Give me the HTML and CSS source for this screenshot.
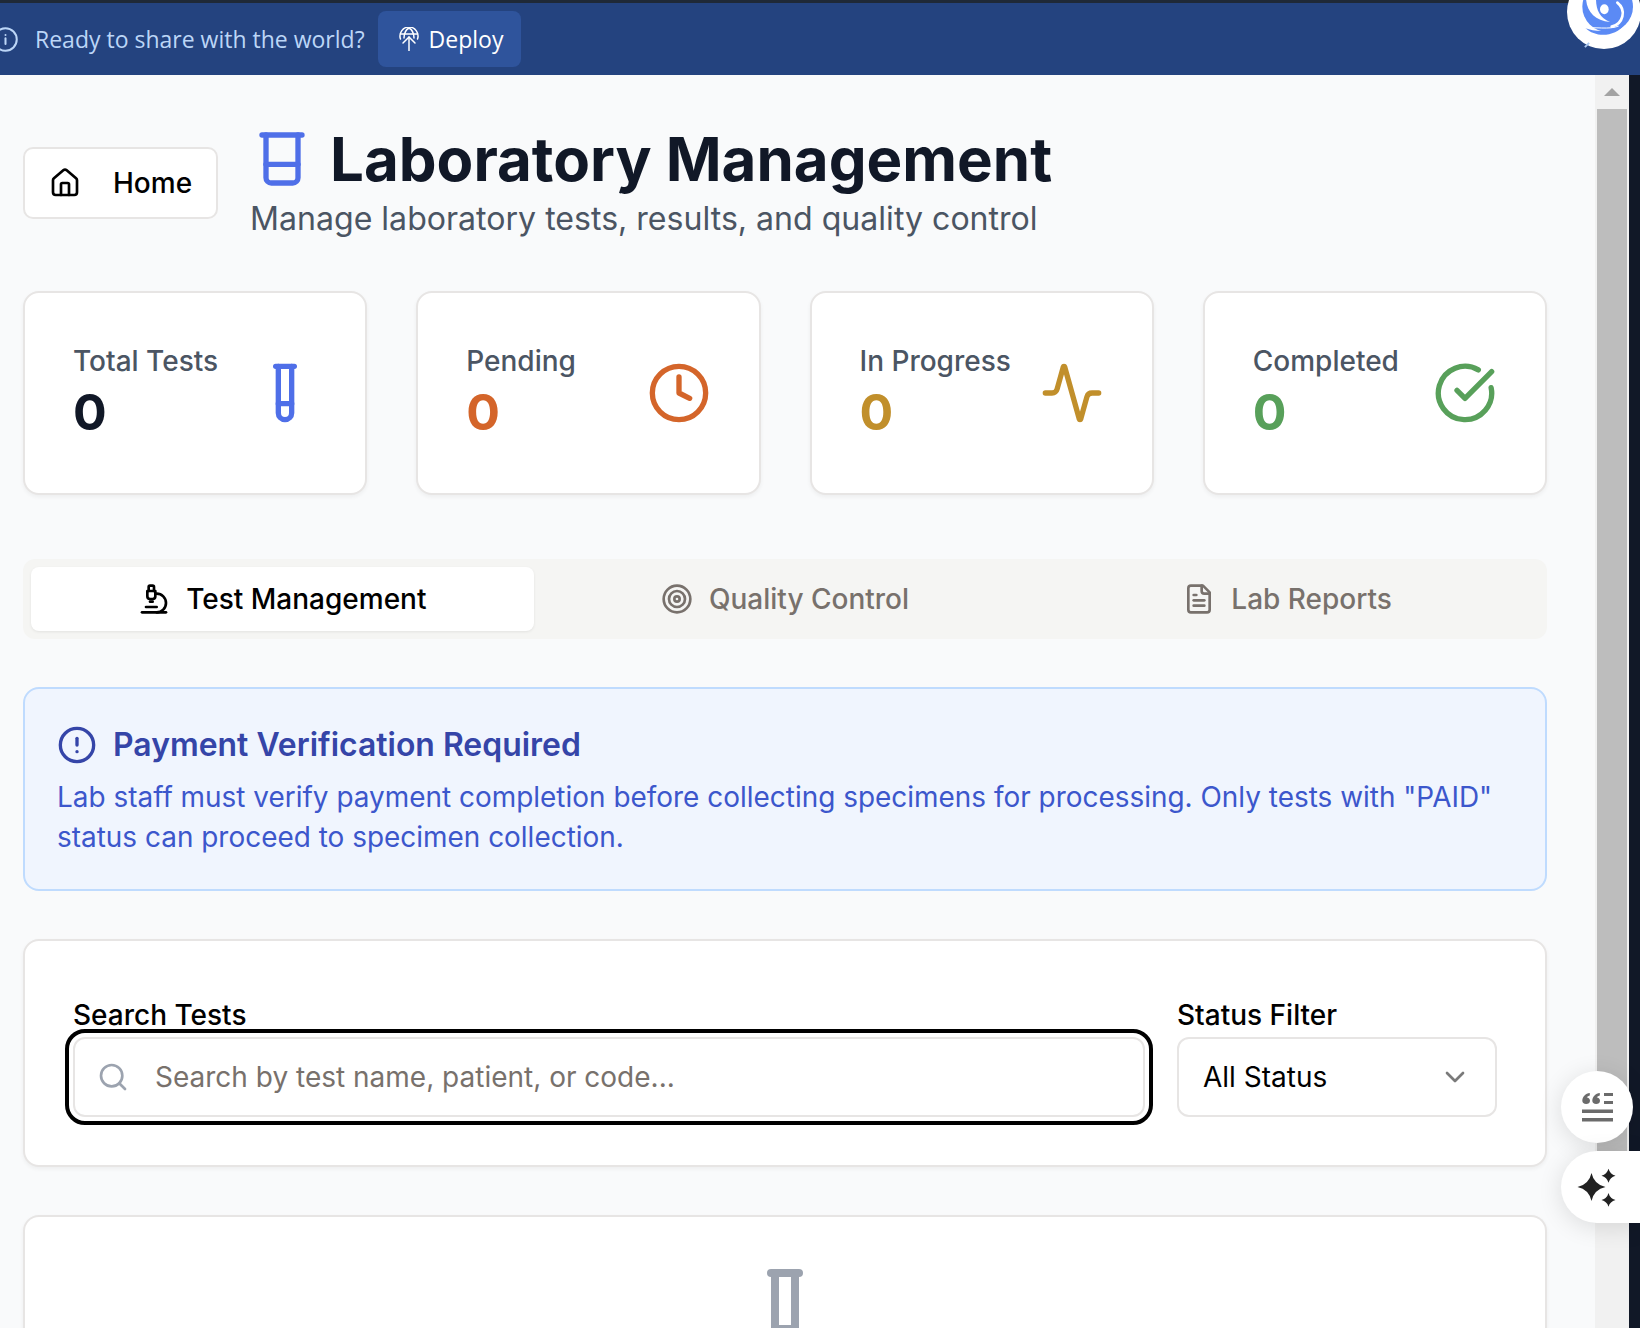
FILE: index.html
```html
<!DOCTYPE html>
<html lang="en">
<head>
    <meta charset="UTF-8" />
    <meta name="viewport" content="width=device-width, initial-scale=1.0" />
    <title>Laboratory Management</title>
    <link rel="stylesheet" href="styles.css">
</head>
<body>
    <header class="deploy-bar">
        <svg class="bar-info" viewBox="0 0 24 24"><circle cx="12" cy="12" r="10"/><path d="M12 16v-5"/><path d="M12 8h.01"/></svg>
        <span class="bar-text">Ready to share with the world?</span>
        <button class="deploy-btn">
            <svg viewBox="0 0 20 24"><path d="M1.500 12A9 9 0 1 1 18.500 12"/><path d="M10 1C6.500 3 5 7 5 11"/><path d="M10 1c3.500 2 5 6 5 10"/><path d="M1.500 7h17"/><path d="M10 24V10"/><path d="m4 16 6-6 6 6"/></svg>
            Deploy
        </button>
    </header>

    <div class="viewport">
        <main class="page">
            <section class="page-head">
                <a class="home-btn" href="#">
                    <svg class="icon" viewBox="0 0 24 24"><path d="M15 21v-8a1 1 0 0 0-1-1h-4a1 1 0 0 0-1 1v8"/><path d="M3 10a2 2 0 0 1 .709-1.528l7-5.999a2 2 0 0 1 2.582 0l7 5.999A2 2 0 0 1 21 10v9a2 2 0 0 1-2 2H5a2 2 0 0 1-2-2z"/></svg>
                    Home
                </a>
                <div>
                    <h1>
                        <svg class="icon title-icon" viewBox="0 0 24 24"><path d="M4.500 3h15"/><path d="M6 3v16a2 2 0 0 0 2 2h8a2 2 0 0 0 2-2V3"/><path d="M6 14h12"/></svg>
                        Laboratory Management
                    </h1>
                    <p class="subtitle">Manage laboratory tests, results, and quality control</p>
                </div>
            </section>

            <section class="stats">
                <div class="stat-card">
                    <div class="stat-text">
                        <p class="stat-label">Total Tests</p>
                        <p class="stat-value">0</p>
                    </div>
                    <svg class="icon stat-icon blue" viewBox="0 0 24 24"><path d="M14.500 2v17.500c0 1.400-1.100 2.500-2.500 2.500s-2.500-1.100-2.500-2.500V2"/><path d="M8.500 2h7"/><path d="M14.500 16h-5"/></svg>
                </div>
                <div class="stat-card">
                    <div class="stat-text">
                        <p class="stat-label">Pending</p>
                        <p class="stat-value orange">0</p>
                    </div>
                    <svg class="icon stat-icon orange" viewBox="0 0 24 24"><circle cx="12" cy="12" r="10"/><path d="M12 6v6l4 2"/></svg>
                </div>
                <div class="stat-card">
                    <div class="stat-text">
                        <p class="stat-label">In Progress</p>
                        <p class="stat-value amber">0</p>
                    </div>
                    <svg class="icon stat-icon amber" viewBox="0 0 24 24"><path d="M22 12h-2.480a2 2 0 0 0-1.930 1.460l-2.350 8.360a.25.25 0 0 1-.48 0L9.240 2.180a.25.25 0 0 0-.48 0l-2.350 8.360A2 2 0 0 1 4.490 12H2"/></svg>
                </div>
                <div class="stat-card">
                    <div class="stat-text">
                        <p class="stat-label">Completed</p>
                        <p class="stat-value green">0</p>
                    </div>
                    <svg class="icon stat-icon green" viewBox="0 0 24 24"><path d="M21.801 10A10 10 0 1 1 17 3.335"/><path d="m9 11 3 3L22 4"/></svg>
                </div>
            </section>

            <nav class="tabs">
                <button class="tab active">
                    <svg class="icon" viewBox="0 0 24 24"><path d="M6 18h8"/><path d="M3 22h18"/><path d="M14 22a7 7 0 1 0 0-14h-1"/><path d="M9 14h2"/><path d="M9 12a2 2 0 0 1-2-2V6h6v4a2 2 0 0 1-2 2Z"/><path d="M12 6V3a1 1 0 0 0-1-1H9a1 1 0 0 0-1 1v3"/></svg>
                    Test Management
                </button>
                <button class="tab">
                    <svg class="icon" viewBox="0 0 24 24"><circle cx="12" cy="12" r="10"/><circle cx="12" cy="12" r="6"/><circle cx="12" cy="12" r="2"/></svg>
                    Quality Control
                </button>
                <button class="tab">
                    <svg class="icon" viewBox="0 0 24 24"><path d="M15 2H6a2 2 0 0 0-2 2v16a2 2 0 0 0 2 2h12a2 2 0 0 0 2-2V7Z"/><path d="M14 2v4a2 2 0 0 0 2 2h4"/><path d="M10 9H8"/><path d="M16 13H8"/><path d="M16 17H8"/></svg>
                    Lab Reports
                </button>
            </nav>

            <section class="notice">
                <h3>
                    <svg class="icon" viewBox="0 0 24 24"><circle cx="12" cy="12" r="10"/><path d="M12 8v4"/><path d="M12 16h.01"/></svg>
                    Payment Verification Required
                </h3>
                <p>Lab staff must verify payment completion before collecting specimens for processing. Only tests with "PAID" status can proceed to specimen collection.</p>
            </section>

            <section class="card filters">
                <div class="field grow">
                    <label for="search">Search Tests</label>
                    <div class="search-box">
                        <svg class="icon" viewBox="0 0 24 24"><path d="m21 21-4.340-4.340"/><circle cx="11" cy="11" r="8"/></svg>
                        <input id="search" type="text" placeholder="Search by test name, patient, or code..." />
                    </div>
                </div>
                <div class="field status">
                    <label>Status Filter</label>
                    <div class="select-box">
                        All Status
                        <svg class="icon" viewBox="0 0 24 24"><path d="m6 9 6 6 6-6"/></svg>
                    </div>
                </div>
            </section>

            <section class="card empty">
                <svg class="icon" viewBox="0 0 24 24"><path d="M14.500 2v17.500c0 1.400-1.100 2.500-2.500 2.500s-2.500-1.100-2.500-2.500V2"/><path d="M8.500 2h7"/><path d="M14.500 16h-5"/></svg>
            </section>
        </main>

        <div class="scrollbar">
            <div class="scroll-arrow"></div>
            <div class="scroll-thumb"></div>
        </div>
        <div class="edge"></div>
    </div>

    <svg class="logo-bubble" viewBox="0 0 240 180">
        <circle cx="132" cy="36" r="111" fill="#fff"/>
        <circle cx="143" cy="20" r="76" fill="#5b8af5"/>
        <path d="M78-5C80 35 105 62 150 66 118 52 108 30 108-5Z" fill="#fff"/>
        <path class="swirl" d="M172 8C200 30 190 72 155 80"/>
        <ellipse cx="133" cy="28" rx="13" ry="15" fill="#fff"/>
        <path d="M76 84C104 96 156 100 196 72 164 112 108 114 76 84Z" fill="#5b8af5"/>
        <path d="M74 84C100 80 150 90 176 78" fill="none" stroke="#fff" stroke-width="3"/>
    </svg>
    <button class="float-btn quote-btn">
        <svg viewBox="0 0 31 29"><path d="M.3 7.500C.6 3.500 3.500.6 7.800 0v2.600C6 3 5 4.200 4.700 4.200 6.600 4.600 8 6 8 7.700 8 9.800 6.300 11 4.200 11 1.800 11 .2 9.600.3 7.500Z"/><path d="M10.300 7.500C10.600 3.500 13.500.6 17.800 0v2.600C16 3 15 4.200 14.700 4.200 16.600 4.600 18 6 18 7.700 18 9.800 16.300 11 14.200 11 11.800 11 10.200 9.600 10.300 7.500Z"/><path d="M22 0h9v3h-9zM22 8h9v3h-9zM0 16.500h31V20H0zM0 25h31v3.500H0z"/></svg>
    </button>
    <button class="float-btn spark-btn">
        <svg viewBox="0 0 39 39"><path d="M14.500 5Q17 16.500 28.500 19 17 21.500 14.500 33 12 21.500.5 19 12 16.500 14.500 5Z"/><path d="M31.500.7Q33 6 38.500 7.700 33 9.200 31.500 14.700 30 9.200 24.500 7.700 30 6 31.500.7Z"/><path d="M31.500 25Q33 30.500 38.500 32 33 33.500 31.500 38.700 30 33.500 24.500 32 30 30.500 31.500 25Z"/></svg>
    </button>
    <div class="bar-chevron"></div>
</body>
</html>
```

FILE: styles.css
```css
* {
    box-sizing: border-box;
}
html, body {
    height: 100%;
}
body {
    margin: 0;
    font-family: Inter, "Liberation Sans", sans-serif;
    background-color: #f9fafb;
    color: #000;
    overflow: hidden;
    display: flex;
    flex-direction: column;
}
p, h1, h3 {
    margin: 0;
}
.icon {
    fill: none;
    stroke: currentColor;
    stroke-width: 2;
    stroke-linecap: round;
    stroke-linejoin: round;
    flex-shrink: 0;
}

/* deploy banner */
.deploy-bar {
    height: 75px;
    flex-shrink: 0;
    background-color: #24437f;
    border-top: 3px solid #1f2937;
    display: flex;
    align-items: center;
    padding-left: 35px;
    gap: 13px;
    position: relative;
    color: #bcd6f7;
    font-family: "Open Sans", sans-serif;
    font-size: 23px;
}
.bar-info {
    position: absolute;
    left: -8px;
    top: 23px;
    width: 27px;
    height: 27px;
    fill: none;
    stroke: currentColor;
    stroke-width: 1.8;
    stroke-linecap: round;
}
.deploy-btn {
    width: 143px;
    height: 56px;
    border: none;
    border-radius: 8px;
    background-color: #2f549c;
    color: #fff;
    font-family: inherit;
    font-size: 23px;
    display: flex;
    align-items: center;
    gap: 10px;
    padding: 0 0 0 21px;
}
.deploy-btn svg {
    width: 20px;
    height: 24px;
    fill: none;
    stroke: currentColor;
    stroke-width: 1.5;
    stroke-linecap: round;
    stroke-linejoin: round;
}

.viewport {
    flex: 1;
    display: flex;
    min-height: 0;
}
.page {
    flex: 1;
    min-width: 0;
    padding: 52px 48px 0 23px;
    overflow: hidden;
}

/* header */
.page-head {
    display: flex;
    align-items: center;
    gap: 32px;
    margin-bottom: 52px;
}
.home-btn {
    width: 195px;
    height: 72px;
    background-color: #fff;
    border: 2px solid #e7e5e4;
    border-radius: 10px;
    color: #000;
    text-decoration: none;
    font-size: 28px;
    font-weight: 500;
    display: flex;
    align-items: center;
    gap: 32px;
    padding-left: 24px;
}
.home-btn .icon {
    width: 32px;
    height: 32px;
}
h1 {
    font-size: 60px;
    font-weight: 700;
    line-height: 60px;
    color: #111827;
    display: flex;
    align-items: center;
    gap: 16px;
}
.title-icon {
    width: 64px;
    height: 64px;
    color: #4f6fe8;
}
.subtitle {
    font-size: 32.1px;
    line-height: 40px;
    color: #4b5563;
    margin-top: 8px;
}

/* stat cards */
.stats {
    display: grid;
    grid-template-columns: repeat(4, 1fr);
    gap: 49px;
    margin-bottom: 64px;
}
.stat-card {
    height: 204px;
    background-color: #fff;
    border: 2px solid #e7e5e4;
    border-radius: 16px;
    box-shadow: 0 2px 4px rgba(0, 0, 0, 0.05);
    padding: 0 48px;
    display: flex;
    align-items: center;
    justify-content: space-between;
}
.stat-text {
    padding-bottom: 4px;
}
.stat-label {
    font-size: 28px;
    line-height: 40px;
    font-weight: 500;
    color: #4b5563;
}
.stat-value {
    font-size: 50px;
    line-height: 60px;
    font-weight: 700;
    color: #111827;
    margin-top: 1px;
}
.stat-icon {
    width: 64px;
    height: 64px;
}
.blue { color: #4f6fe8; }
.orange { color: #d4652a; }
.amber { color: #c18f2b; }
.green { color: #58a05a; }
.stat-value.orange { color: #d4652a; }
.stat-value.amber { color: #c18f2b; }
.stat-value.green { color: #58a05a; }

/* tabs */
.tabs {
    display: grid;
    grid-template-columns: repeat(3, 1fr);
    height: 80px;
    padding: 8px;
    background-color: #f5f5f3;
    border-radius: 12px;
    margin-bottom: 48px;
}
.tab {
    border: none;
    background: none;
    border-radius: 8px;
    font-family: inherit;
    font-size: 28px;
    font-weight: 500;
    color: #78716c;
    display: flex;
    align-items: center;
    justify-content: center;
    gap: 16px;
}
.tab .icon {
    width: 32px;
    height: 32px;
}
.tab.active {
    background-color: #fff;
    color: #000;
    box-shadow: 0 1px 3px rgba(0, 0, 0, 0.08);
}

/* payment notice */
.notice {
    height: 204px;
    padding: 34px 32px 0;
    background-color: #f0f5fe;
    border: 2px solid #bfdbfe;
    border-radius: 16px;
    margin-bottom: 48px;
}
.notice h3 {
    font-size: 31.95px;
    line-height: 44px;
    font-weight: 600;
    color: #3545a8;
    display: flex;
    align-items: center;
    gap: 16px;
    margin-bottom: 10px;
}
.notice h3 .icon {
    width: 40px;
    height: 40px;
}
.notice p {
    font-size: 27.95px;
    line-height: 40px;
    color: #3c57cc;
}

/* filter card */
.card {
    background-color: #fff;
    border: 2px solid #e7e5e4;
    border-radius: 16px;
    box-shadow: 0 2px 4px rgba(0, 0, 0, 0.05);
}
.filters {
    height: 228px;
    padding: 54px 48px 0;
    display: flex;
    gap: 32px;
    margin-bottom: 48px;
}
.field label {
    display: block;
    font-size: 28px;
    line-height: 40px;
    font-weight: 500;
    height: 42px;
}
.grow {
    flex: 1;
}
.status {
    width: 320px;
}
.search-box,
.select-box {
    height: 80px;
    background-color: #fff;
    border: 2px solid #e7e5e4;
    border-radius: 12px;
    display: flex;
    align-items: center;
    font-size: 28px;
}
.search-box {
    outline: 4px solid #000;
    outline-offset: 4px;
    padding-left: 22px;
    gap: 26px;
}
.search-box .icon {
    width: 32px;
    height: 32px;
    color: #9ca3af;
}
.search-box input {
    flex: 1;
    border: none;
    outline: none;
    background: none;
    padding: 0;
    font-family: inherit;
    font-size: 28px;
}
.search-box input::placeholder {
    color: #78716c;
    opacity: 1;
}
.select-box {
    justify-content: space-between;
    padding: 0 24px;
}
.select-box .icon {
    width: 32px;
    height: 32px;
    color: #7a7a7a;
}

.empty {
    height: 200px;
    padding-top: 48px;
    display: flex;
    justify-content: center;
    border-bottom: none;
}
.empty .icon {
    width: 96px;
    height: 96px;
    color: #9ca3af;
}

/* window scrollbar */
.scrollbar {
    width: 34px;
    flex-shrink: 0;
    background-color: #f1f1f1;
    padding: 0 2px;
}
.scroll-arrow {
    height: 34px;
    position: relative;
}
.scroll-arrow::before {
    content: "";
    position: absolute;
    left: 7px;
    top: 13px;
    border-left: 8px solid transparent;
    border-right: 8px solid transparent;
    border-bottom: 8px solid #a3a3a3;
}
.scroll-thumb {
    height: 1060px;
    background-color: #bdbdbd;
}
.edge {
    width: 11px;
    flex-shrink: 0;
    background-color: #111827;
}

/* floating widgets */
.logo-bubble {
    position: absolute;
    left: 1560px;
    top: 0;
    width: 80px;
    height: 60px;
}
.swirl {
    fill: none;
    stroke: #fff;
    stroke-width: 8;
    stroke-linecap: round;
}
.float-btn {
    position: absolute;
    border: none;
    background-color: #fff;
    display: flex;
    align-items: center;
    padding: 0;
    box-shadow: 0 4px 24px rgba(0, 0, 0, 0.12);
}
.quote-btn {
    left: 1561px;
    top: 1071px;
    width: 72px;
    height: 72px;
    border-radius: 50%;
    justify-content: center;
}
.quote-btn svg {
    width: 31px;
    height: 29px;
    fill: #6b6b6b;
}
.spark-btn {
    left: 1561px;
    top: 1151px;
    width: 79px;
    height: 72px;
    border-radius: 36px 0 0 36px;
    padding-left: 16px;
}
.spark-btn svg {
    width: 39px;
    height: 39px;
    fill: #222;
}
.bar-chevron {
    position: absolute;
    left: 1584px;
    top: 44px;
    width: 6px;
    height: 2px;
    background-color: #a9c7ee;
    transform: rotate(-45deg);
}
```
